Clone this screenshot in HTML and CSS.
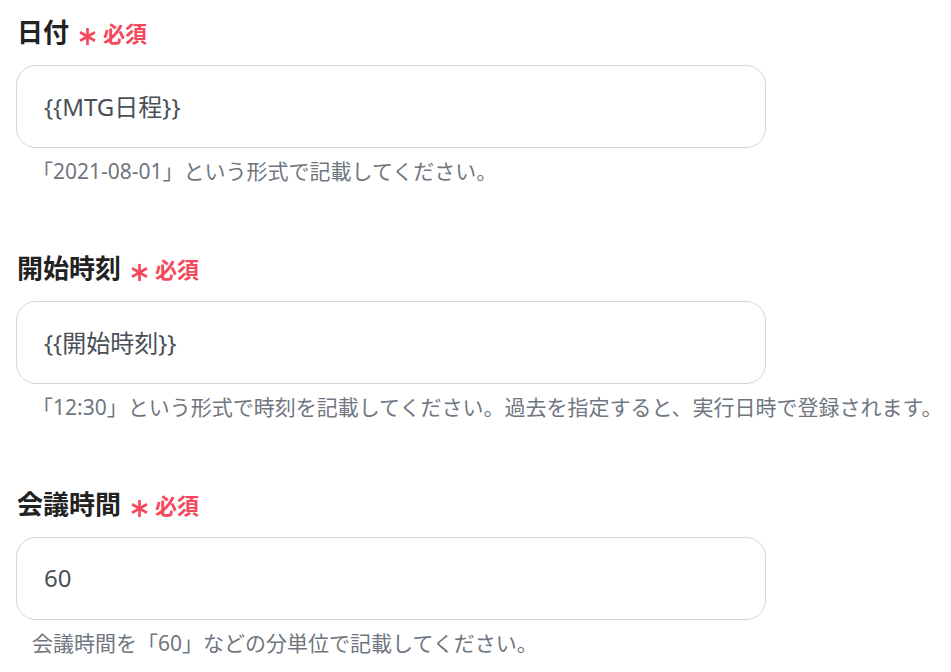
FILE: index.html
```html
<!DOCTYPE html>
<html lang="ja">
<head>
<meta charset="utf-8">
<title>フォーム</title>
<link rel="stylesheet" href="styles.css">
</head>
<body>
<div class="form">
  <div class="field">
    <div class="label">
      <span class="label-text">日付</span>
      <svg class="ast" viewBox="0 0 20 20" aria-hidden="true"><g stroke="currentColor" stroke-width="2.8" stroke-linecap="butt"><line x1="10" y1="1" x2="10" y2="19"/><line x1="2.2" y1="5.5" x2="17.8" y2="14.5"/><line x1="2.2" y1="14.5" x2="17.8" y2="5.5"/></g></svg>
      <span class="req">必須</span>
    </div>
    <div class="input">{{MTG日程}}</div>
    <p class="help">「2021-08-01」という形式で記載してください。</p>
  </div>
  <div class="field">
    <div class="label">
      <span class="label-text">開始時刻</span>
      <svg class="ast" viewBox="0 0 20 20" aria-hidden="true"><g stroke="currentColor" stroke-width="2.8" stroke-linecap="butt"><line x1="10" y1="1" x2="10" y2="19"/><line x1="2.2" y1="5.5" x2="17.8" y2="14.5"/><line x1="2.2" y1="14.5" x2="17.8" y2="5.5"/></g></svg>
      <span class="req">必須</span>
    </div>
    <div class="input">{{開始時刻}}</div>
    <p class="help">「12:30」という形式で時刻を記載してください。過去を指定すると、実行日時で登録されます。</p>
  </div>
  <div class="field">
    <div class="label">
      <span class="label-text">会議時間</span>
      <svg class="ast" viewBox="0 0 20 20" aria-hidden="true"><g stroke="currentColor" stroke-width="2.8" stroke-linecap="butt"><line x1="10" y1="1" x2="10" y2="19"/><line x1="2.2" y1="5.5" x2="17.8" y2="14.5"/><line x1="2.2" y1="14.5" x2="17.8" y2="5.5"/></g></svg>
      <span class="req">必須</span>
    </div>
    <div class="input">60</div>
    <p class="help">会議時間を「60」などの分単位で記載してください。</p>
  </div>
</div>
</body>
</html>
```

FILE: styles.css
```css
* { box-sizing: border-box; }
html, body {
  margin: 0;
  padding: 0;
  background: #ffffff;
  font-family: "Noto Sans", "Noto Sans CJK JP", sans-serif;
}
.form {
  padding: 16px 0 0 16px;
  display: flex;
  flex-direction: column;
  gap: 66px;
}
.field {
  display: flex;
  flex-direction: column;
}
.label {
  display: flex;
  align-items: center;
  height: 32px;
  margin-bottom: 17px;
}
.label-text {
  font-size: 26px;
  font-weight: 700;
  color: #222222;
  line-height: 32px;
  padding-left: 1px;
}
.ast {
  width: 19px;
  height: 19px;
  color: #f7475d;
  margin-left: 9px;
  margin-top: 8px;
}
.req {
  font-size: 22px;
  font-weight: 700;
  color: #f7475d;
  margin-left: 6px;
  line-height: 32px;
  margin-top: 2px;
}
.input {
  width: 750px;
  height: 83px;
  border: 1px solid #d3d6dc;
  border-radius: 20px;
  padding-left: 27px;
  padding-bottom: 3px;
  display: flex;
  align-items: center;
  font-size: 24px;
  color: #4a4f57;
}
.help {
  margin: 8px 0 0 0;
  padding-left: 16px;
  font-size: 21px;
  line-height: 30px;
  color: #6f7680;
  white-space: nowrap;
}
```
